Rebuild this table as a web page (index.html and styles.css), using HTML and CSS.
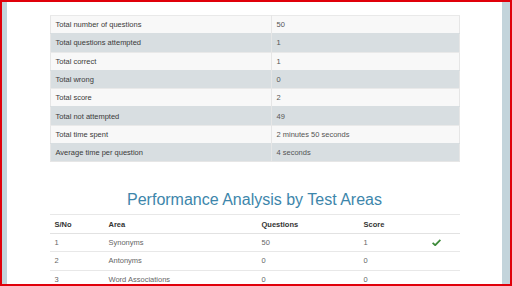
FILE: index.html
```html
<!DOCTYPE html>
<html>
<head>
<meta charset="utf-8">
<link rel="stylesheet" href="styles.css">
</head>
<body>
<div class="frame">
  <div class="strip left"></div>
  <main class="content">
    <div class="topline"></div>
    <table class="summary">
      <tr class="light"><td class="label">Total number of questions</td><td>50</td></tr>
      <tr class="dark"><td class="label">Total questions attempted</td><td>1</td></tr>
      <tr class="light"><td class="label">Total correct</td><td>1</td></tr>
      <tr class="dark"><td class="label">Total wrong</td><td>0</td></tr>
      <tr class="light"><td class="label">Total score</td><td>2</td></tr>
      <tr class="dark"><td class="label">Total not attempted</td><td>49</td></tr>
      <tr class="light"><td class="label">Total time spent</td><td>2 minutes 50 seconds</td></tr>
      <tr class="dark"><td class="label">Average time per question</td><td>4 seconds</td></tr>
    </table>
    <div class="rule"></div>
    <h2 class="title">Performance Analysis by Test Areas</h2>
    <table class="areas">
      <thead>
        <tr><th class="c1">S/No</th><th class="c2">Area</th><th class="c3">Questions</th><th class="c4">Score</th><th class="c5"></th></tr>
      </thead>
      <tbody>
        <tr><td>1</td><td>Synonyms</td><td>50</td><td>1</td><td class="ok"><svg width="9" height="7" viewBox="0 0 9 7"><path d="M0.6 3.8 L3.2 6.2 L8.4 0.8" fill="none" stroke="#3d8a3a" stroke-width="1.8"/></svg></td></tr>
        <tr><td>2</td><td>Antonyms</td><td>0</td><td>0</td><td></td></tr>
        <tr><td>3</td><td>Word Associations</td><td>0</td><td>0</td><td></td></tr>
      </tbody>
    </table>
  </main>
  <div class="strip right"></div>
</div>
</body>
</html>
```
FILE: styles.css
```css
html, body {
  margin: 0;
  padding: 0;
  background: #fff;
}
body {
  font-family: "Liberation Sans", Arial, sans-serif;
  font-size: 7.5px;
  color: #444;
}
.frame {
  box-sizing: border-box;
  width: 512px;
  height: 286px;
  border: 2px solid #e0000a;
  display: flex;
  overflow: hidden;
}
.strip {
  background: #c3d4db;
  flex: none;
}
.strip.left { width: 5px; }
.strip.right { width: 8px; }
.content {
  flex: 1;
  background: #fff;
  display: flex;
  flex-direction: column;
  align-items: center;
  min-width: 0;
}
.topline {
  align-self: stretch;
  height: 1px;
  margin-top: 3px;
  background: #efefef;
}
.summary {
  margin-top: 10px;
  width: 410px;
  border-collapse: collapse;
  border: 1px solid #e6e6e6;
}
.summary td {
  height: 17.3px;
  padding: 0 5px;
  border-top: 1px solid #e9e9e9;
  color: #555;
  vertical-align: middle;
}
.summary td.label {
  width: 210px;
  border-right: 1px solid #e6e6e6;
  color: #3a3a3a;
}
.summary tr.light td { background: #f8f8f8; }
.summary tr.dark td { background: #d8dee1; border-top-color: #d8dee1; }
.rule {
  width: 412px;
  height: 1px;
  background: #eeeeee;
  margin-top: 9px;
}
.title {
  margin: 18px 0 0 0;
  font-weight: normal;
  font-size: 16px;
  line-height: 22px;
  color: #3d86ab;
}
.areas {
  margin-top: 3px;
  width: 410px;
  border-collapse: collapse;
}
.areas th, .areas td {
  height: 17.4px;
  padding: 0 5px;
  text-align: left;
  vertical-align: middle;
  border-top: 1px solid #e8e8e8;
}
.areas th {
  font-weight: bold;
  color: #333;
  border-bottom: 1px solid #e2e2e2;
}
.areas td { color: #666; }
.c1 { width: 44px; }
.c2 { width: 143px; }
.c3 { width: 92px; }
.c4 { width: 58px; }
.areas td.ok { padding-left: 5px; }
.ok svg { display: block; }
```
